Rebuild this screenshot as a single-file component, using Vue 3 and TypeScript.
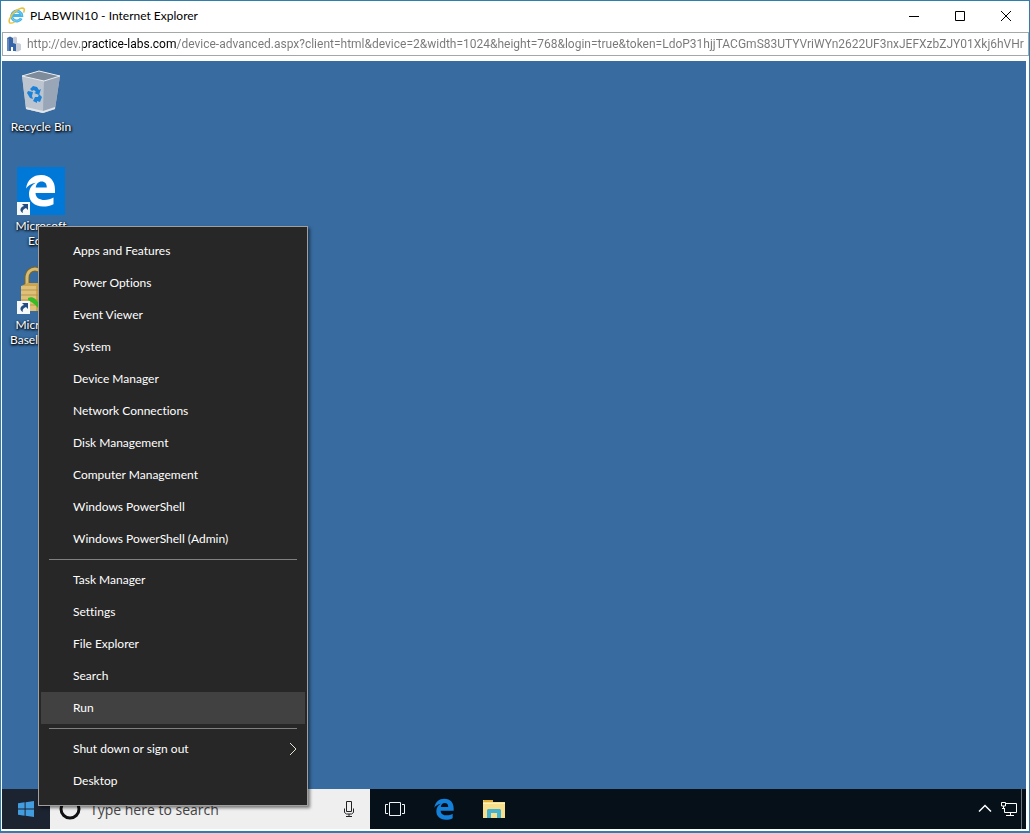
<script setup lang="ts">
import { ref } from 'vue'

interface MenuItem {
  label: string
  submenu?: boolean
}

const groups: MenuItem[][] = [
  [
    { label: 'Apps and Features' },
    { label: 'Power Options' },
    { label: 'Event Viewer' },
    { label: 'System' },
    { label: 'Device Manager' },
    { label: 'Network Connections' },
    { label: 'Disk Management' },
    { label: 'Computer Management' },
    { label: 'Windows PowerShell' },
    { label: 'Windows PowerShell (Admin)' },
  ],
  [
    { label: 'Task Manager' },
    { label: 'Settings' },
    { label: 'File Explorer' },
    { label: 'Search' },
    { label: 'Run' },
  ],
  [{ label: 'Shut down or sign out', submenu: true }, { label: 'Desktop' }],
]

const active = ref('Run')
const query = ref('')
const address =
  'http://dev.practice-labs.com/device-advanced.aspx?client=html&device=2&width=1024&height=768&login=true&token=LdoP31hjjTACGmS83UTYVriWYn2622UF3nxJEFXzbZJY01Xkj6hVHr'
</script>

<template>
  <div class="window">
    <header class="titlebar">
      <svg class="ie" viewBox="0 0 18 18" aria-hidden="true">
        <path d="M13.2 11.3A5 5 0 1 1 13.7 8.6H4.5" fill="none" stroke="#45b4e8" stroke-width="3" />
        <path d="M13.2 11.3A5 5 0 1 1 13.7 8.6" fill="none" stroke="#7ad0f3" stroke-width="1" />
        <path d="M2.8 16.2C-.4 15.8 1.4 9.800 6.300 5.200 11 .8 16.100-.1 16.300 2.800c0 1-.3 1.900-.8 2.800" fill="none" stroke="#e9c23c" stroke-width="1.600" />
        <path d="M2.800 16.200c1.200.1 2.600-.5 4-1.400" fill="none" stroke="#e9c23c" stroke-width="1.300" />
      </svg>
      <h1 class="title">PLABWIN10 - Internet Explorer</h1>
      <div class="controls">
        <button type="button" aria-label="Minimize">
          <svg viewBox="0 0 12 12"><path d="M1 6.500h10" /></svg>
        </button>
        <button type="button" aria-label="Maximize">
          <svg viewBox="0 0 12 12"><path d="M1.500 1.500h9v9h-9z" /></svg>
        </button>
        <button type="button" aria-label="Close">
          <svg viewBox="0 0 12 12"><path d="M1 1l10 10M11 1L1 11" /></svg>
        </button>
      </div>
    </header>

    <div class="address">
      <svg class="favicon" viewBox="0 0 14 16" aria-hidden="true">
        <path d="M5 2l3-1.500 2 1V7l3 .5 1 1V14l-3 1.500H8z" fill="#c9ced9" />
        <path d="M0 2l3-1.500L6 2v5l3 1v7H6v-4H4v4H0z" fill="#3766a8" />
        <path d="M0 2l2 1v12H0z" fill="#6288bd" />
      </svg>
      <input class="url" type="text" aria-label="Address" readonly :value="address" />
    </div>

    <main class="screen">
      <section class="desktop">
        <button type="button" class="shortcut">
          <svg viewBox="0 0 48 48" aria-hidden="true">
            <path d="M5 8L22 3l21 5-5 33-12 4-17-4z" fill="#aeb9c8" />
            <path d="M5 8l22 5-1 32-17-4z" fill="#bcc5cf" />
            <path d="M27 13l16-5-5 33-12 4z" fill="#98a6b8" />
            <path d="M5 8L22 3l21 5-16 5z" fill="#7e8b9a" stroke="#e8edf1" stroke-width="1" />
            <path d="M9 39l17 4 12-4v2l-12 4-17-4z" fill="#e2e6ea" />
            <g fill="#1c82d8">
              <path d="M13 21l3-3 4 1 2 3 2-1-2 6-5-2 2-1-2-2-2 1z" />
              <path d="M11 23l5 1-1 4 1 3-3-1-3-5z" />
              <path d="M18 29l-2 4 4 2v-2l3 1 2-5-3-3-1 3z" />
            </g>
          </svg>
          <span>Recycle Bin</span>
        </button>

        <button type="button" class="shortcut">
          <svg viewBox="0 0 48 48" aria-hidden="true">
            <path d="M0 0h48v48H0z" fill="#0078d7" />
            <path d="M9 21.500C10.500 12.500 16 8 24.200 8 33.500 8 38 14.500 38 22.500V26H18.500c.3 5 4.200 7 9 7 3.300 0 6.500-1 9-2.500v6.700c-2.900 1.600-6.500 2.300-10.400 2.300C17.500 39.500 12 34.500 12 27c0-5 2.600-9 6.800-11.200C14.500 16.500 11 18.700 9 21.500zM18.700 20.500h11.100c0-3.700-1.700-6-5.200-6-3.200 0-5.300 2.300-5.900 6z" fill="#fff" />
            <path d="M0 35h13v13H0z" fill="#f5f7f8" />
            <path d="M5 37h6v6l-2-2c-3 1-4 3-3 5-4-2-3-6 1-7z" fill="#234c80" />
          </svg>
          <span>Microsoft<br />Edge</span>
        </button>

        <button type="button" class="shortcut">
          <svg viewBox="0 0 48 48" aria-hidden="true">
            <path d="M10 24V12C10 0 26 0 26 12v12" fill="none" stroke="#806521" stroke-width="5" />
            <path d="M10 24V12C10 0 26 0 26 12v12" fill="none" stroke="#d6bd76" stroke-width="3" />
            <path d="M4 20l7-3h26v24l-7 4H4z" fill="#cda54f" />
            <path d="M4 20h15v25H4z" fill="#dfc078" />
            <path d="M4 24h28M4 29h28M4 34h28M4 39h28" stroke="#b8944a" stroke-width="1" />
            <path d="M11 32c4-2 8 0 12 7L40 18v10L24 46c-3-5-7-9-13-12z" fill="#34bd24" />
            <path d="M0 35h13v13H0z" fill="#f5f7f8" />
            <path d="M5 37h6v6l-2-2c-3 1-4 3-3 5-4-2-3-6 1-7z" fill="#234c80" />
          </svg>
          <span>Microsoft<br />Baseline S...</span>
        </button>
      </section>

      <footer class="taskbar">
        <button type="button" class="start" aria-label="Start">
          <svg viewBox="0 0 16 16">
            <path d="M0 2.300L6.600 1.300V7.500H0zM7.600 1.200L16 0v7.500H7.600zM0 8.500h6.600v6.200L0 13.700zM7.600 8.500H16V16l-8.400-1.200z" fill="#429ce0" />
          </svg>
        </button>
        <div class="search">
          <svg class="cortana" viewBox="0 0 22 22" aria-hidden="true">
            <circle cx="11" cy="11" r="9" fill="none" stroke="#111" stroke-width="3" />
          </svg>
          <input v-model="query" type="text" aria-label="Search" placeholder="Type here to search" />
          <button type="button" class="mic" aria-label="Voice search">
            <svg viewBox="0 0 12 18">
              <path d="M3.500 1.500h5v10h-5zM1.500 8.500v4l2 1.500h5l2-1.500v-4M6 14v2.500M3 16.500h6" />
            </svg>
          </button>
        </div>
        <button type="button" class="app taskview" aria-label="Task View">
          <svg viewBox="0 0 20 16">
            <path d="M4.500 1.500h11v13h-11zM3 3.500H.5v9H3M17 3.500h2.500v9H17" fill="none" stroke="#f2f5f6" />
          </svg>
        </button>
        <button type="button" class="app" aria-label="Microsoft Edge">
          <svg viewBox="8 7 31 33">
            <path d="M9 21.500C10.500 12.500 16 8 24.200 8 33.500 8 38 14.500 38 22.500V26H18.500c.3 5 4.200 7 9 7 3.300 0 6.500-1 9-2.500v6.700c-2.900 1.600-6.500 2.300-10.400 2.300C17.500 39.500 12 34.500 12 27c0-5 2.600-9 6.800-11.200C14.500 16.500 11 18.700 9 21.500zM18.700 20.500h11.100c0-3.700-1.700-6-5.200-6-3.200 0-5.300 2.300-5.900 6z" fill="#1380da" />
          </svg>
        </button>
        <button type="button" class="app" aria-label="File Explorer">
          <svg viewBox="0 0 22 22">
            <path d="M0 2h8l2 2h12v16H0z" fill="#f8df8c" />
            <path d="M1 2h9v2H0z" fill="#e3ae35" />
            <path d="M0 5h22v1H0z" fill="#fff0b8" />
            <path d="M4 20v-8l1-1h12l1 1v8h-4v-5H8v5z" fill="#45b3cf" />
          </svg>
        </button>
        <div class="tray">
          <button type="button" aria-label="Show hidden icons">
            <svg viewBox="0 0 16 16"><path d="M2 10.500l6-6 6 6" stroke-width="1.500" /></svg>
          </button>
          <button type="button" aria-label="Network">
            <svg viewBox="0 0 16 16">
              <path d="M5 2.500h10.500v9H3.500V7M.5 1.500h4v3.500h-4zM2.500 5v2M1 7.500h3M9.500 11.500v3M5 14.500h8" />
            </svg>
          </button>
          <button type="button" class="peek" aria-label="Show desktop"></button>
        </div>
      </footer>

      <nav class="menu" aria-label="Quick links">
        <ul v-for="(group, index) in groups" :key="index">
          <li v-for="item in group" :key="item.label">
            <button
              type="button"
              :class="{ active: active === item.label }"
              @mouseenter="active = item.label"
            >
              {{ item.label }}
              <svg v-if="item.submenu" viewBox="0 0 8 14" aria-hidden="true">
                <path d="M1 1l6 6-6 6" />
              </svg>
            </button>
          </li>
        </ul>
      </nav>
    </main>
  </div>
</template>

<style>
body {
  margin: 0;
  background: #fff;
}
</style>

<style scoped>
.window {
  box-sizing: border-box;
  display: flex;
  flex-direction: column;
  min-height: 100vh;
  border: 1px solid #2f7fae;
  border-bottom-width: 2px;
  background: #fff;
  font-family: "Segoe UI", Lato, "Open Sans", sans-serif;
  font-size: 12px;
  font-variant-ligatures: none;
  color: #000;
}
button,
input {
  margin: 0;
  padding: 0;
  border: 0;
  outline: 0;
  background: transparent;
  font: inherit;
  color: inherit;
}
svg {
  display: block;
  flex: none;
}
.titlebar {
  display: flex;
  align-items: center;
  height: 30px;
  padding-left: 7px;
}
.ie {
  width: 18px;
  height: 18px;
}
.title {
  flex: 1;
  margin: 0 0 0 4px;
  font-size: 12px;
  font-weight: 400;
  line-height: 16px;
}
.controls {
  display: flex;
}
.controls button {
  display: grid;
  place-items: center;
  width: 46px;
  height: 28px;
}
.controls svg {
  width: 12px;
  height: 12px;
  fill: none;
  stroke: #000;
}
.address {
  box-sizing: border-box;
  display: flex;
  align-items: center;
  height: 24px;
  margin: 1px 0 5px 1px;
  padding: 0 4px;
  border: 1px solid #a3a8ab;
}
.favicon {
  width: 14px;
  height: 16px;
}
.url {
  flex: 1;
  min-width: 0;
  height: 20px;
  margin-left: 6px;
  background: linear-gradient(90deg, #777 56px, #000 56px, #000 150px, #777 150px);
  background-clip: text;
  font-family: "Segoe UI", Roboto, sans-serif;
  color: transparent;
}
.screen {
  position: relative;
  flex: 1;
  display: flex;
  flex-direction: column;
  margin: 0 3px 2px 1px;
  background: #386ba0;
}
.desktop {
  flex: 1;
  display: flex;
  flex-direction: column;
  align-items: flex-start;
  padding: 7px 1px;
}
.shortcut {
  display: flex;
  flex-direction: column;
  align-items: center;
  gap: 3px;
  width: 76px;
  height: 99px;
  color: #fff;
  line-height: 15px;
  text-align: center;
  text-shadow: 1px 1px 2px #000, 0 1px 3px #000;
  white-space: nowrap;
}
.shortcut svg {
  width: 48px;
  height: 48px;
}
.taskbar {
  display: flex;
  height: 40px;
  background: #061018;
}
.start {
  display: grid;
  place-items: center;
  width: 48px;
  background: #1c2331;
}
.start svg {
  width: 16px;
  height: 16px;
}
.search {
  display: flex;
  align-items: center;
  width: 320px;
  background: #efefef;
}
.cortana {
  width: 22px;
  height: 22px;
  margin-left: 9px;
}
.search input {
  flex: 1;
  min-width: 0;
  margin-left: 9px;
  font-family: "Segoe UI", "Open Sans", sans-serif;
  font-size: 14px;
  color: #333;
}
.search input::placeholder {
  color: #444;
  opacity: 1;
}
.mic {
  display: grid;
  place-items: center;
  width: 42px;
  height: 40px;
}
.mic svg {
  width: 12px;
  height: 18px;
  fill: none;
  stroke: #222;
}
.app {
  display: grid;
  place-items: center;
  width: 50px;
}
.app svg {
  width: 22px;
  height: 22px;
}
.app.taskview {
  width: 49px;
}
.app.taskview svg {
  width: 20px;
  height: 16px;
}
.tray {
  display: flex;
  margin-left: auto;
}
.tray button {
  display: grid;
  place-items: center;
  width: 24px;
}
.tray svg {
  width: 16px;
  height: 16px;
  fill: none;
  stroke: #fff;
}
.tray .peek {
  width: 5px;
  border-left: 1px solid #6c7379;
}
.menu {
  position: absolute;
  left: 36px;
  bottom: 23px;
  box-sizing: border-box;
  width: 270px;
  padding: 8px 2px;
  border: 1px solid #a0a0a0;
  background: #272727;
  color: #fff;
  box-shadow: 2px 2px 3px rgba(0, 0, 0, 0.5);
}
.menu ul {
  margin: 0;
  padding: 0;
  list-style: none;
}
.menu ul + ul::before {
  content: "";
  display: block;
  height: 1px;
  margin: 4px 8px;
  background: #808080;
}
.menu button {
  display: flex;
  align-items: center;
  justify-content: space-between;
  width: 100%;
  height: 32px;
  padding: 0 8px 0 32px;
  line-height: 16px;
  text-align: left;
}
.menu button.active {
  background: #414141;
}
.menu svg {
  width: 8px;
  height: 14px;
  fill: none;
  stroke: #e4e4d4;
}
</style>
